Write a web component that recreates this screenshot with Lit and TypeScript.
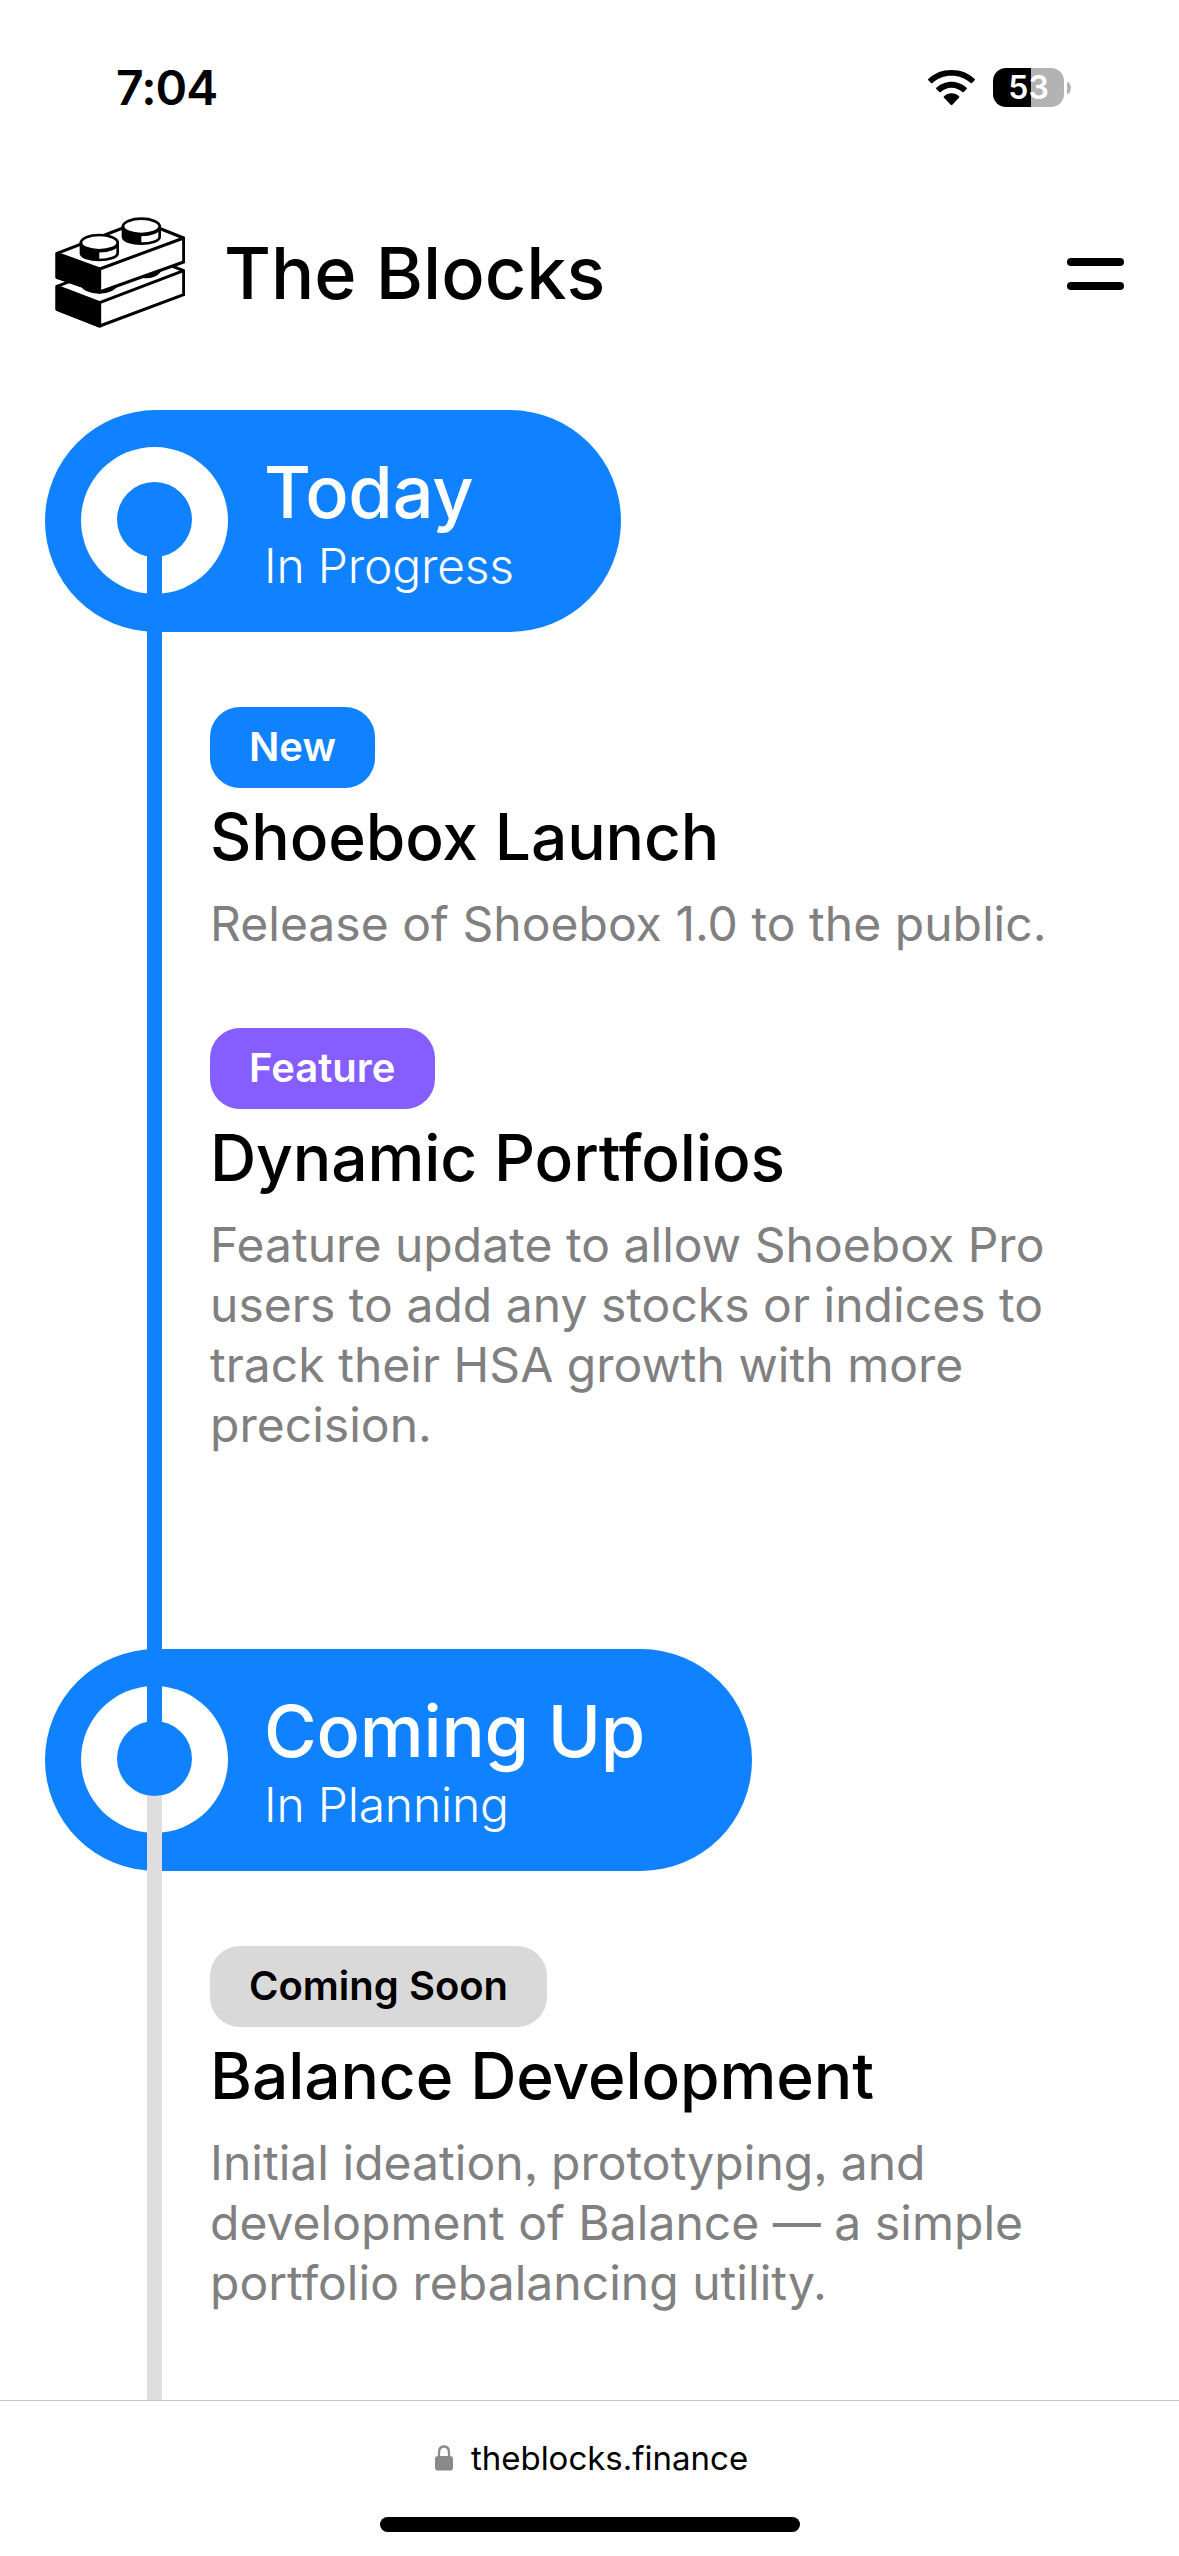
import { LitElement, html, css, svg } from "lit";
import { customElement, property } from "lit/decorators.js";

interface Entry {
  tag: string;
  tone: string;
  title: string;
  lines: string[];
}

interface Phase {
  name: string;
  status: string;
  rail: string;
  entries: Entry[];
}

const PHASES: Phase[] = [
  {
    name: "Today",
    status: "In Progress",
    rail: "active",
    entries: [
      {
        tag: "New",
        tone: "blue",
        title: "Shoebox Launch",
        lines: ["Release of Shoebox 1.0 to the public."],
      },
      {
        tag: "Feature",
        tone: "purple",
        title: "Dynamic Portfolios",
        lines: [
          "Feature update to allow Shoebox Pro",
          "users to add any stocks or indices to",
          "track their HSA growth with more",
          "precision.",
        ],
      },
    ],
  },
  {
    name: "Coming Up",
    status: "In Planning",
    rail: "pending",
    entries: [
      {
        tag: "Coming Soon",
        tone: "gray",
        title: "Balance Development",
        lines: [
          "Initial ideation, prototyping, and",
          "development of Balance — a simple",
          "portfolio rebalancing utility.",
        ],
      },
    ],
  },
];

@customElement("status-bar")
export class StatusBar extends LitElement {
  static styles = css`
    :host {
      display: flex;
      justify-content: space-between;
      height: 176px;
      box-sizing: border-box;
      padding: 68px 108px 0 116px;
    }
    .time {
      font-size: 48px;
      font-weight: 600;
      line-height: 40px;
      letter-spacing: -0.9px;
    }
    .icons {
      display: flex;
      gap: 18px;
      height: 39px;
    }
    .wifi {
      width: 47px;
      height: 35px;
      margin-top: 2px;
    }
    .battery {
      display: flex;
      align-items: center;
      gap: 3px;
    }
    .cell {
      width: 71px;
      height: 39px;
      border-radius: 13px;
      background: linear-gradient(90deg, #000 38px, #b3b3b3 38px);
      color: #fff;
      font-size: 32px;
      font-weight: 600;
      line-height: 40px;
      text-align: center;
    }
    .nub {
      width: 4px;
      height: 12px;
      border-radius: 0 4px 4px 0 / 0 6px 6px 0;
      background: #b3b3b3;
    }
  `;

  render() {
    return html`
      <div class="time">7:04</div>
      <div class="icons">
        <svg class="wifi" viewBox="0 0 141 105">
          <path d="M70.500 0C43 0 18 10 1 27Q-1 29 1 31L9 39Q11 41 13 39C28 25 48 17 70.500 17S113 25 128 39Q130 41 132 39L140 31Q142 29 140 27C123 10 98 0 70.500 0Z" />
          <path d="M70.500 35C53 35 37 42 25 53Q23 55 25 57L34 66Q36 68 38 66C47 58 58 53 70.500 53S94 58 103 66Q105 68 107 66L116 57Q118 55 116 53C104 42 88 35 70.500 35Z" />
          <path d="M70.500 70C62 70 54 73 48 79Q46 81 48 83L68 104Q70.500 106 73 104L93 83Q95 81 93 79C87 73 79 70 70.500 70Z" />
        </svg>
        <div class="battery">
          <div class="cell">53</div>
          <div class="nub"></div>
        </div>
      </div>
    `;
  }
}

@customElement("site-header")
export class SiteHeader extends LitElement {
  static styles = css`
    :host {
      display: flex;
      align-items: center;
      height: 196px;
      padding: 0 55px 0 55px;
    }
    .logo {
      width: 130px;
      height: 112px;
      margin-top: -4px;
    }
    .name {
      flex: 1;
      margin: -2px 0 0 39px;
      font-size: 72px;
      font-weight: 500;
      line-height: 88px;
    }
    .menu {
      display: flex;
      flex-direction: column;
      gap: 16px;
    }
    .bar {
      width: 57px;
      height: 8px;
      border-radius: 4px;
      background: #000;
    }
  `;

  private stud(x: number, y: number) {
    return svg`
      <g transform="translate(${x} ${y})">
        <path d="M-55 0V32A55 20 0 0 0 55 32V0Z" fill="#fff" stroke="#000" stroke-width="8" />
        <path d="M-55 0V32A55 20 0 0 0 0 52V22Z" fill="#000" />
        <path d="M-54 4A54 22 0 0 0 54 4" fill="none" stroke="#000" stroke-width="7" />
        <ellipse rx="55" ry="23" fill="#fff" stroke="#000" stroke-width="8" />
      </g>
    `;
  }

  render() {
    return html`
      <svg class="logo" viewBox="46 46 390 336">
        <g stroke="#000" stroke-width="9" stroke-linejoin="round">
          <path d="M52 257L304 160L432 210V282L180 376L52 326Z" fill="#fff" />
          <path d="M52 257L180 306V376L52 326Z" fill="#000" />
          <path d="M180 306L432 210" fill="none" />
          <path d="M122 254Q134 279 178 279Q224 279 238 250Z" fill="#000" stroke="none" />
          <path d="M300 230Q322 236 344 228Q360 222 368 204Z" fill="#000" stroke="none" />
          <path d="M52 158L304 61L432 112V184L180 274L52 230Z" fill="#fff" />
          <path d="M52 158L180 205V274L52 230Z" fill="#000" />
          <path d="M180 205L432 112" fill="none" />
        </g>
        ${this.stud(305, 77)} ${this.stud(179, 126)}
      </svg>
      <div class="name">The Blocks</div>
      <div class="menu">
        <div class="bar"></div>
        <div class="bar"></div>
      </div>
    `;
  }
}

@customElement("timeline-phase")
export class TimelinePhase extends LitElement {
  @property({ attribute: false }) phase!: Phase;

  static styles = css`
    :host {
      display: block;
      position: relative;
      height: 1239px;
      padding-left: 45px;
    }
    .pill {
      display: inline-flex;
      align-items: center;
      box-sizing: border-box;
      height: 222px;
      padding: 0 107px 0 36px;
      border-radius: 111px;
      background: #1182ff;
      color: #fff;
    }
    .ring {
      display: grid;
      place-items: center;
      width: 147px;
      height: 147px;
      margin-top: -2px;
      border-radius: 50%;
      background: #fff;
    }
    .dot {
      position: relative;
      z-index: 2;
      width: 75px;
      height: 75px;
      margin-top: -1px;
      border-radius: 50%;
      background: #1182ff;
    }
    .rail {
      position: absolute;
      z-index: 1;
      left: 147px;
      top: 130px;
      width: 15px;
      height: 1239px;
    }
    .active {
      background: #1182ff;
    }
    .pending {
      background: #dedede;
    }
    .label {
      margin-left: 36px;
    }
    .name {
      margin-top: 3px;
      font-size: 72px;
      font-weight: 500;
      line-height: 84px;
      letter-spacing: -0.25px;
    }
    .status {
      margin-top: 2px;
      font-size: 48px;
      font-weight: 300;
      line-height: 60px;
      letter-spacing: -0.2px;
    }
    .entries {
      display: flex;
      flex-direction: column;
      gap: 75px;
      padding: 75px 0 0 165px;
    }
    .tag {
      display: inline-block;
      height: 81px;
      padding: 0 39px;
      border-radius: 30px;
      font-size: 40px;
      font-weight: 600;
      line-height: 80px;
    }
    .blue {
      background: #1182ff;
      color: #fff;
    }
    .purple {
      background: #865eff;
      color: #fff;
    }
    .gray {
      background: #d9d9d9;
      color: #000;
    }
    .title {
      margin-top: 9px;
      font-size: 64px;
      font-weight: 500;
      line-height: 80px;
      letter-spacing: -0.1px;
    }
    .text {
      margin: 17px 0 -1px;
      color: #808080;
      font-size: 48px;
      line-height: 60px;
      letter-spacing: 0.03px;
      white-space: nowrap;
    }
  `;

  render() {
    const { name, status, rail, entries } = this.phase;
    return html`
      <div class="pill">
        <div class="ring"><div class="dot"></div></div>
        <div class="label">
          <div class="name">${name}</div>
          <div class="status">${status}</div>
        </div>
      </div>
      <div class="rail ${rail}"></div>
      <div class="entries">
        ${entries.map(
          (e) => html`
            <div class="entry">
              <div class="tag ${e.tone}">${e.tag}</div>
              <div class="title">${e.title}</div>
              <div class="text">${e.lines.map((l) => html`<div>${l}</div>`)}</div>
            </div>
          `
        )}
      </div>
    `;
  }
}

@customElement("address-bar")
export class AddressBar extends LitElement {
  static styles = css`
    :host {
      display: flex;
      flex-direction: column;
      align-items: center;
      box-sizing: border-box;
      height: 156px;
      border-top: 1px solid #c6c6c6;
      background: #fefefe;
    }
    .url {
      display: flex;
      align-items: center;
      gap: 18px;
      height: 40px;
      margin: 37px 0 39px 4px;
      font-size: 33px;
      line-height: 40px;
    }
    .lock {
      width: 18px;
      height: 26px;
    }
    .home {
      width: 420px;
      height: 15px;
      border-radius: 7.5px;
      background: #000;
    }
  `;

  render() {
    return html`
      <div class="url">
        <svg class="lock" viewBox="0 0 18 26">
          <rect y="11" width="18" height="14.500" rx="3" fill="#8a8a8e" />
          <path d="M4 12V7.500Q4 1.500 9 1.500T14 7.500V12" fill="none" stroke="#8a8a8e" stroke-width="2.300" />
        </svg>
        <span>theblocks.finance</span>
      </div>
      <div class="home"></div>
    `;
  }
}

@customElement("app-root")
export class AppRoot extends LitElement {
  static styles = css`
    :host {
      display: flex;
      flex-direction: column;
      width: 1179px;
      height: 2556px;
      overflow: hidden;
      background: #fff;
      color: #000;
      font-family: Inter, "Liberation Sans", sans-serif;
      font-feature-settings: "ss03", "calt" 0;
    }
    .timeline {
      flex: 1;
      min-height: 0;
      padding-top: 38px;
      overflow: hidden;
    }
  `;

  render() {
    return html`
      <status-bar></status-bar>
      <site-header></site-header>
      <div class="timeline">
        ${PHASES.map((p) => html`<timeline-phase .phase=${p}></timeline-phase>`)}
      </div>
      <address-bar></address-bar>
    `;
  }
}
